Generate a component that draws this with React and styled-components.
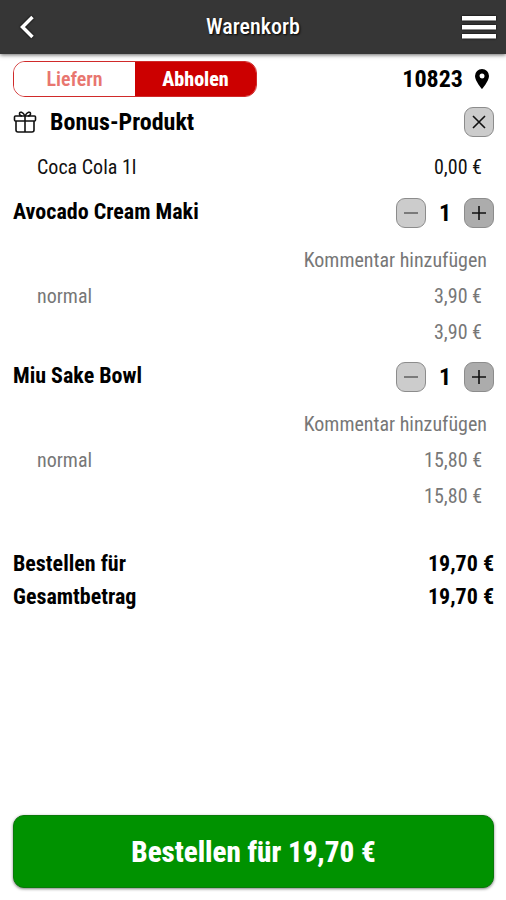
import { useState } from "react";
import styled, { createGlobalStyle } from "styled-components";

const GlobalStyle = createGlobalStyle`
  * {
    box-sizing: border-box;
  }

  body {
    margin: 0;
    background: #fff;
    color: #000;
    font-family: "Roboto Condensed", "Liberation Sans Narrow", Roboto, sans-serif;
    font-size: 20px;
    line-height: 24px;
  }

  button {
    padding: 0;
    font-family: inherit;
    cursor: pointer;
  }
`;

const Page = styled.div`
  display: flex;
  flex-direction: column;
  min-height: 100vh;
`;

const Header = styled.header`
  display: grid;
  grid-template-columns: 36px 1fr 36px;
  align-items: center;
  height: 54px;
  padding: 0 9px;
  background: #363636;
  color: #fff;
  box-shadow: 0 1px 4px rgba(0, 0, 0, 0.6);
`;

const Title = styled.h1`
  margin: 0;
  font-size: 22px;
  font-weight: 500;
  text-align: center;
  text-shadow: 1px 1px 2px #000;
`;

const HeaderButton = styled.button`
  display: flex;
  align-items: center;
  justify-content: center;
  height: 36px;
  border: 0;
  background: none;
  color: #fff;

  svg {
    filter: drop-shadow(0 0 1px #000);
  }
`;

const Main = styled.main`
  display: flex;
  flex: 1;
  flex-direction: column;
  padding: 7px 12px 12px 13px;
`;

const Row = styled.div`
  display: flex;
  align-items: center;
  justify-content: space-between;
`;

const Toggle = styled.div`
  display: flex;
  width: 244px;
  height: 36px;
  border: 1px solid #d02a2a;
  border-radius: 12px;
  overflow: hidden;
`;

const ToggleButton = styled.button`
  flex: 1;
  border: 0;
  background: ${({ $active }) => ($active ? "#cc0000" : "#fff")};
  color: ${({ $active }) => ($active ? "#fff" : "#e8766f")};
  font-size: 20px;
  font-weight: ${({ $active }) => ($active ? 800 : 600)};
`;

const Location = styled.a`
  display: flex;
  align-items: center;
  gap: 12px;
  padding-right: 5px;
  color: #000;
  font-size: 24px;
  font-weight: 700;
  text-decoration: none;
`;

const BonusHeader = styled(Row)`
  height: 50px;
`;

const BonusTitle = styled.h2`
  display: flex;
  align-items: center;
  gap: 13px;
  margin: 0;
  font-size: 24px;
  font-weight: 700;
`;

const Item = styled.section`
  padding-bottom: 1px;
`;

const ItemHeader = styled(Row)`
  height: 52px;
  margin-bottom: 3px;
`;

const ItemName = styled.h2`
  margin: 0;
  padding-bottom: 2px;
  font-size: 22px;
  font-weight: 700;
`;

const Detail = styled(Row)`
  height: ${({ $bonus }) => ($bonus ? "40px" : "36px")};
  padding: 0 12px 0 24px;
  color: ${({ $bonus }) => ($bonus ? "#111" : "#777")};
`;

const Price = styled.span`
  margin-left: auto;
`;

const CommentRow = styled(Row)`
  justify-content: flex-end;
  height: 36px;
  padding-right: 7px;
`;

const CommentButton = styled.button`
  border: 0;
  background: none;
  color: #777;
  font-size: 20px;
`;

const Stepper = styled.div`
  display: flex;
  align-items: center;
`;

const Count = styled.span`
  width: 38px;
  font-size: 24px;
  font-weight: 700;
  text-align: center;
`;

const SquareButton = styled.button`
  display: flex;
  align-items: center;
  justify-content: center;
  width: 30px;
  height: 30px;
  border: 1px solid #8c8c8c;
  border-radius: 9px;
  background: ${({ $dark }) => ($dark ? "#acacac" : "#cccccc")};
  color: ${({ $muted }) => ($muted ? "#666" : "#111")};
`;

const Totals = styled.dl`
  margin: 32px 0;
  font-size: 22px;
  font-weight: 700;
`;

const TotalRow = styled(Row)`
  height: 33px;

  dd {
    margin: 0;
  }
`;

const OrderButton = styled.button`
  height: 73px;
  margin-top: auto;
  border: 1px solid #0a7a0a;
  border-radius: 11px;
  background: #009200;
  color: #fff;
  font-size: 29px;
  font-weight: 800;
  box-shadow: 0 1px 3px rgba(0, 0, 0, 0.5);
`;

function BackIcon() {
  return (
    <svg width="16" height="24" viewBox="0 0 16 24" fill="none" stroke="currentColor" strokeWidth="3.500">
      <path d="M13.500 2 3.500 12l10 10" />
    </svg>
  );
}

function MenuIcon() {
  return (
    <svg width="34" height="24" viewBox="0 0 34 24" fill="currentColor">
      <path d="M0 1h34v4.500H0zM0 10h34v4.500H0zM0 19h34v4.500H0z" />
    </svg>
  );
}

function PinIcon() {
  return (
    <svg width="14" height="20" viewBox="0 0 14 20" fill="currentColor">
      <path
        fillRule="evenodd"
        d="M7 0a7 7 0 0 0-7 7c0 5 7 13 7 13s7-8 7-13a7 7 0 0 0-7-7Zm0 4.500a2.500 2.500 0 1 1 0 5 2.500 2.500 0 0 1 0-5Z"
      />
    </svg>
  );
}

function GiftIcon() {
  return (
    <svg width="24" height="22" viewBox="0 0 24 22" fill="none" stroke="#111" strokeWidth="1.600">
      <rect x="1.500" y="5" width="21" height="5" rx="1" />
      <path d="M3 10v9a2 2 0 0 0 2 2h14a2 2 0 0 0 2-2v-9M12 5v16" />
      <path d="M12 5C10 1 6.500 0 6.500 2.800 6.500 4 7.500 5 9 5M12 5c2-4 5.500-5 5.500-2.200C17.500 4 16.500 5 15 5" />
    </svg>
  );
}

function StrokeIcon({ d }) {
  return (
    <svg width="14" height="14" viewBox="0 0 14 14" fill="none" stroke="currentColor" strokeWidth="1.600">
      <path d={d} />
    </svg>
  );
}

const formatPrice = (value) => `${value.toFixed(2).replace(".", ",")} €`;

function CartItem({ name, variant, price, count, onChange }) {
  return (
    <Item>
      <ItemHeader>
        <ItemName>{name}</ItemName>
        <Stepper>
          <SquareButton $muted aria-label="Weniger" onClick={() => onChange(Math.max(1, count - 1))}>
            <StrokeIcon d="M0 7h14" />
          </SquareButton>
          <Count>{count}</Count>
          <SquareButton $dark aria-label="Mehr" onClick={() => onChange(count + 1)}>
            <StrokeIcon d="M0 7h14M7 0v14" />
          </SquareButton>
        </Stepper>
      </ItemHeader>
      <CommentRow>
        <CommentButton>Kommentar hinzufügen</CommentButton>
      </CommentRow>
      <Detail>
        <span>{variant}</span>
        <Price>{formatPrice(price)}</Price>
      </Detail>
      <Detail>
        <Price>{formatPrice(price * count)}</Price>
      </Detail>
    </Item>
  );
}

export default function App() {
  const [mode, setMode] = useState("Abholen");
  const [bonus, setBonus] = useState(true);
  const [items, setItems] = useState([
    { name: "Avocado Cream Maki", variant: "normal", price: 3.9, count: 1 },
    { name: "Miu Sake Bowl", variant: "normal", price: 15.8, count: 1 },
  ]);

  const total = formatPrice(items.reduce((sum, item) => sum + item.price * item.count, 0));

  const setCount = (name, count) =>
    setItems(items.map((item) => (item.name === name ? { ...item, count } : item)));

  return (
    <>
      <GlobalStyle />
      <Page>
        <Header>
          <HeaderButton aria-label="Zurück">
            <BackIcon />
          </HeaderButton>
          <Title>Warenkorb</Title>
          <HeaderButton aria-label="Menü">
            <MenuIcon />
          </HeaderButton>
        </Header>
        <Main>
          <Row>
            <Toggle>
              {["Liefern", "Abholen"].map((name) => (
                <ToggleButton
                  key={name}
                  $active={mode === name}
                  aria-pressed={mode === name}
                  onClick={() => setMode(name)}
                >
                  {name}
                </ToggleButton>
              ))}
            </Toggle>
            <Location href="#location">
              10823
              <PinIcon />
            </Location>
          </Row>
          {bonus && (
            <section>
              <BonusHeader>
                <BonusTitle>
                  <GiftIcon />
                  Bonus-Produkt
                </BonusTitle>
                <SquareButton aria-label="Entfernen" onClick={() => setBonus(false)}>
                  <StrokeIcon d="m1 1 12 12M13 1 1 13" />
                </SquareButton>
              </BonusHeader>
              <Detail $bonus>
                <span>Coca Cola 1l</span>
                <Price>{formatPrice(0)}</Price>
              </Detail>
            </section>
          )}
          {items.map((item) => (
            <CartItem key={item.name} {...item} onChange={(count) => setCount(item.name, count)} />
          ))}
          <Totals>
            <TotalRow>
              <dt>Bestellen für</dt>
              <dd>{total}</dd>
            </TotalRow>
            <TotalRow>
              <dt>Gesamtbetrag</dt>
              <dd>{total}</dd>
            </TotalRow>
          </Totals>
          <OrderButton>Bestellen für {total}</OrderButton>
        </Main>
      </Page>
    </>
  );
}
